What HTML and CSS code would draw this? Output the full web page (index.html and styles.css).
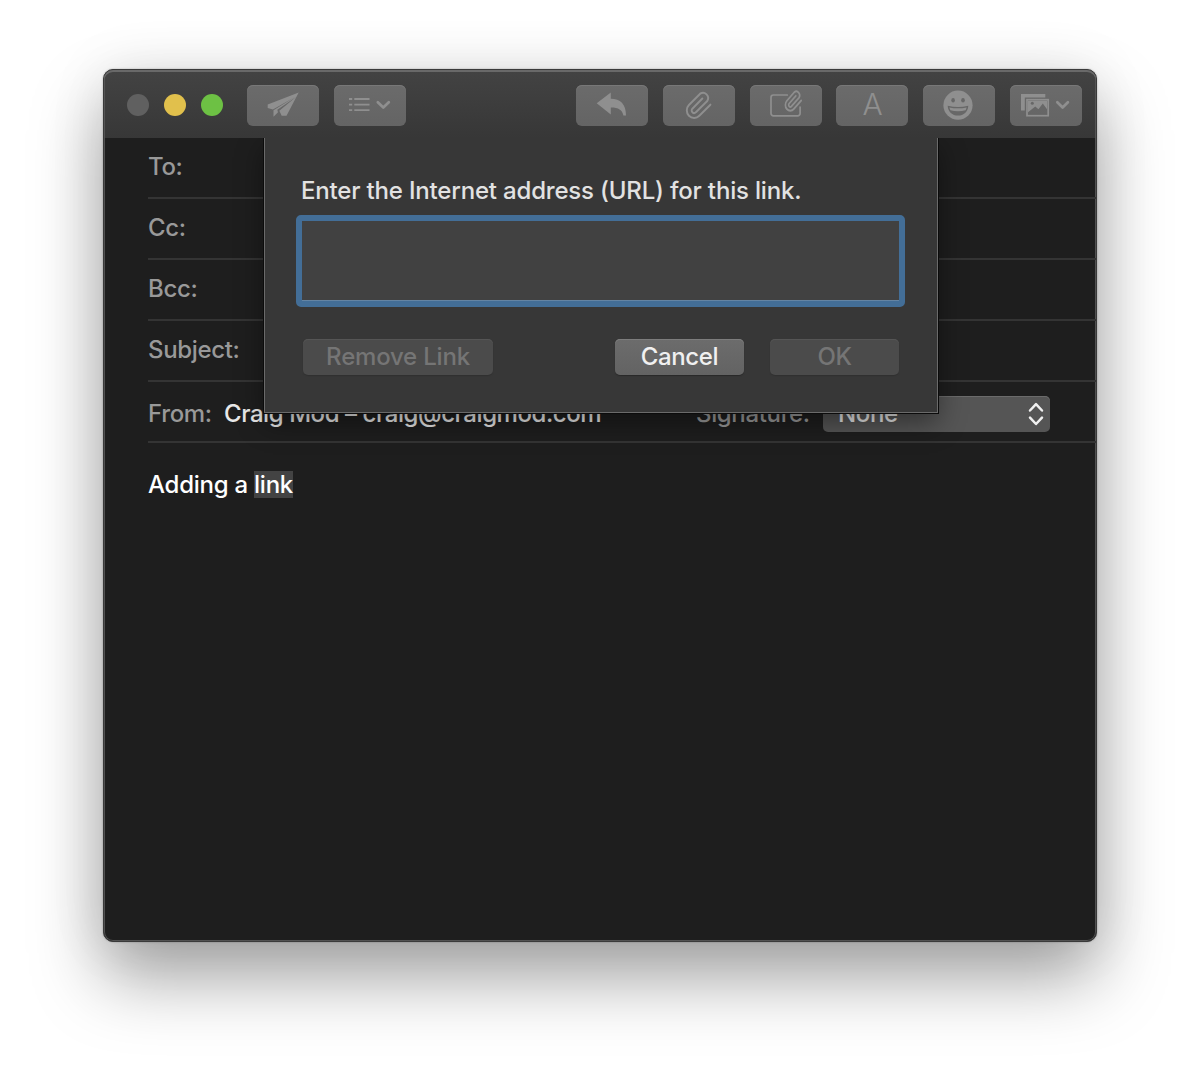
FILE: index.html
```html
<!DOCTYPE html>
<html lang="en">
<head>
<meta charset="utf-8">
<title>New Message</title>
<link rel="stylesheet" href="styles.css">
</head>
<body>
<main class="window">
  <header class="toolbar">
    <div class="lights"><i class="light"></i><i class="light light-min"></i><i class="light light-max"></i></div>
    <div class="tools">
      <button class="tool" aria-label="Send"><svg viewBox="0 0 72 41"><path class="fill" d="M51.7 7.6 20.7 19.4V23l5.2 1.4L47.5 12.2 26.5 25.3V31.8L31 27.3 30.3 24.8 49.3 11.7 32.3 25.7 34.7 30.8H39.5Z"/></svg></button>
      <button class="tool" aria-label="Header fields"><svg viewBox="0 0 72 41"><path class="line thin" d="M15 14h3.2M20.3 14h15.2M15 19.6h3.2M20.3 19.6h15.2M15 25.2h3.2M20.3 25.2h15.2"/><path class="line bold" d="m43.8 17.2 5.5 5.3 5.5-5.3"/></svg></button>
    </div>
    <div class="tools tools-end">
      <button class="tool" aria-label="Reply"><svg viewBox="0 0 72 41"><path class="fill" d="M20.7 18.2 34.8 7.4v6.3c9.5 0 15.2 5.4 15.2 16.7h-2.6c-1.3-5.3-4.6-7.8-12.6-7.8v6.8Z"/></svg></button>
      <button class="tool" aria-label="Attach"><svg viewBox="0 0 72 41"><path class="line clip" transform="translate(21.3 5.3) scale(1.22 1.25)" d="m21.4 11.5-9.1 8.8a6 6 0 0 1-8.5-8.5L13 2.7a4.2 4.2 0 0 1 5.8 5.8l-9.3 9a2 2 0 0 1-2.9-2.8l8.2-8.1"/></svg></button>
      <button class="tool" aria-label="Markup attachment"><svg viewBox="0 0 72 41"><path class="line frame" d="M37.3 10H23.4A2.4 2.4 0 0 0 21 12.4v16a2.4 2.4 0 0 0 2.4 2.4h24.3a2.4 2.4 0 0 0 2.4-2.4V22"/><path class="line clip small" transform="translate(33.7 4.5) scale(.82 .96)" d="m21.4 11.5-9.1 8.8a6 6 0 0 1-8.5-8.5L13 2.7a4.2 4.2 0 0 1 5.8 5.8l-9.3 9a2 2 0 0 1-2.9-2.8l8.2-8.1"/></svg></button>
      <button class="tool letter" aria-label="Fonts">A</button>
      <button class="tool" aria-label="Emoji"><svg viewBox="0 0 72 41"><circle class="fill" cx="35" cy="20.2" r="14.6"/><ellipse class="hole" cx="30.1" cy="15.3" rx="1.8" ry="2.2"/><ellipse class="hole" cx="40" cy="15.3" rx="1.8" ry="2.2"/><path class="hole" d="M24.7 20.7q10.3 2.6 20.6 0c-.3 6-4.6 9.9-10.3 9.9S25 26.7 24.7 20.7Z"/><path class="fill" d="M26.3 22.4q8.7 1.8 17.4 0l-1.1 2.8q-7.6 2-15.2 0Z"/></svg></button>
      <button class="tool" aria-label="Photos"><svg viewBox="0 0 72 41"><path class="fill" d="M11 9.1h24.3v3.4H14.8v13H11Z"/><rect class="line frame" x="17" y="14.7" width="21.2" height="16"/><path class="fill" d="M18 15.7H37V24.3L32.8 18.4 28.4 24.3 25.3 21.4 18 27.3Z"/><circle class="hole" cx="22.3" cy="18.3" r="1.5"/><path class="line bold" d="m47.3 17.2 5.3 5.3 5.3-5.3"/></svg></button>
    </div>
  </header>
  <section class="fields">
    <div class="row"><span>To:</span></div>
    <div class="row"><span>Cc:</span></div>
    <div class="row"><span>Bcc:</span></div>
    <div class="row"><span>Subject:</span></div>
    <div class="row row-from">
      <span class="from-label">From:</span><span class="sender">Craig Mod – craig@craigmod.com</span>
      <span class="signature">Signature:</span>
      <div class="select"><span>None</span><svg class="updown" viewBox="0 0 16 24"><path d="m2 8.5 6-6.3 6 6.3M2 15.7l6 6.3 6-6.3"/></svg></div>
    </div>
  </section>
  <article class="message"><span>Adding a <mark>link</mark></span></article>
  <section class="sheet">
    <label class="prompt" for="url">Enter the Internet address (URL) for this link.</label>
    <input class="url" id="url">
    <div class="actions">
      <button class="action remove" disabled>Remove Link</button>
      <button class="action cancel">Cancel</button>
      <button class="action ok" disabled>OK</button>
    </div>
  </section>
</main>
</body>
</html>
```
FILE: styles.css
```css
* { box-sizing: border-box; }
body {
  margin: 0;
  height: 1078px;
  padding: 69px 0 0 103px;
  background: #fff;
  font: 450 24px/30px Inter, "Liberation Sans", sans-serif;
  letter-spacing: -.35px;
  overflow: hidden;
}
button, input { font: inherit; letter-spacing: inherit; border: 0; padding: 0; margin: 0; }
span, label { white-space: nowrap; }

.window {
  position: relative;
  width: 994px;
  height: 873px;
  border: 1px solid #3a3a3a;
  border-radius: 10px;
  background: #1e1e1e;
  box-shadow: inset 0 0 0 1px #515151, 0 0 2px rgba(0,0,0,.3), 0 36px 70px rgba(0,0,0,.36), 0 0 60px rgba(0,0,0,.08);
}
.toolbar {
  height: 68px;
  display: flex;
  align-items: flex-start;
  padding: 15px 14px 0 23.4px;
  border-radius: 9px 9px 0 0;
  background: linear-gradient(#434343, #373737);
  box-shadow: inset 0 2px #696969, inset 1px 0 #555, inset -1px 0 #555;
}
.lights { display: flex; gap: 15px; padding-top: 9px; width: 120px; }
.light { width: 22px; height: 22px; border-radius: 50%; background: #606060; }
.light-min { background: #e1c04c; }
.light-max { background: #6dc144; }
.tools { display: flex; gap: 14.8px; }
.tools-end { margin-left: auto; }
.tool {
  width: 72px;
  height: 41px;
  border-radius: 6px;
  background: linear-gradient(#6b6b6b, #646464);
  box-shadow: inset 0 1px #787878;
  color: #8f8f8f;
}
.tool svg { display: block; width: 72px; height: 41px; }
.fill { fill: #8f8f8f; }
.hole { fill: #676767; }
.line { fill: none; stroke: #8f8f8f; stroke-linecap: round; stroke-linejoin: round; }
.thin { stroke-width: 1.8; stroke-linecap: butt; }
.bold { stroke-width: 2.7; }
.clip { stroke-width: 1.6; }
.small { stroke-width: 2; }
.frame { stroke-width: 1.7; stroke-linejoin: miter; }
.letter { padding-bottom: 2px; font-size: 30px; line-height: 39px; font-weight: 350; }

.fields { padding: 0 0 0 44px; color: #999; }
.row { height: 61px; border-bottom: 2px solid #343434; display: flex; align-items: center; padding-bottom: 1px; }
.row-from { padding: 4px 45px 0 0; }
.from-label { width: 76px; }
.sender { color: #e8e8e8; width: 472px; letter-spacing: -.43px; }
.signature { width: 127px; }
.select {
  width: 227px;
  height: 36px;
  display: flex;
  align-items: center;
  justify-content: space-between;
  padding: 0 6px 0 15px;
  border-radius: 5px;
  background: #555;
  box-shadow: inset 0 1px #6b6b6b;
  color: #e6e6e6;
}
.updown { width: 16px; height: 24px; fill: none; stroke: #f0f0f0; stroke-width: 2.5; stroke-linecap: round; stroke-linejoin: round; }

.message { padding: 27px 44px; color: #fff; letter-spacing: -.25px; }
mark { background: #434343; color: #fff; display: inline-block; height: 27px; line-height: 28px; }

.sheet {
  position: absolute;
  left: 160px;
  top: 68px;
  width: 674px;
  height: 275px;
  padding: 38px 38px 0 36px;
  border: 1px solid #6a6a6a;
  border-top: 0;
  background: #373737;
  box-shadow: 0 0 0 1px #0b0b0b, 0 10px 26px rgba(0,0,0,.42);
  clip-path: inset(0 -60px -60px -60px);
  color: #e2e2e2;
}
.prompt { display: block; height: 39px; letter-spacing: -.18px; }
.url {
  display: block;
  width: 609px;
  height: 92px;
  margin-left: -5px;
  border: 6px solid #436e97;
  border-radius: 5px;
  background: #414141;
  box-shadow: inset 0 -1px #6484a3;
  outline: 0;
}
.actions { display: flex; margin: 32px 0 0 2px; }
.action { height: 36px; border-radius: 5px; background: #4b4b4b; color: #757575; box-shadow: inset 0 1px #555, 0 1px 1px #303030; }
.remove { width: 190px; letter-spacing: -.2px; }
.cancel { width: 129px; margin-left: 122px; background: linear-gradient(#6c6c6c, #636363); box-shadow: inset 0 1px #7d7d7d, 0 1px 1px #292929; color: #f0f0f0; }
.ok { width: 129px; margin-left: 26px; }
```
